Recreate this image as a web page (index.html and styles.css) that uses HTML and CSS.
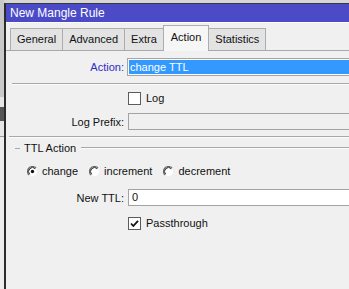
FILE: index.html
```html
<!DOCTYPE html>
<html lang="en">
<head>
  <meta charset="UTF-8" />
  <title>New Mangle Rule</title>
  <link rel="stylesheet" href="styles.css">
</head>
<body>
  <div class="desk">
    <!-- window behind -->
    <div class="behind">
      <div class="behind-top"></div>
      <div class="behind-mark"></div>
      <div class="behind-rest"></div>
    </div>

    <div class="window">
      <div class="titlebar">New Mangle Rule</div>

      <!-- tabs -->
      <div class="tabs">
        <div class="tab">General</div>
        <div class="tab">Advanced</div>
        <div class="tab">Extra</div>
        <div class="tab active">Action</div>
        <div class="tab">Statistics</div>
      </div>

      <div class="panel">
        <div class="row row-action">
          <label class="lbl blue">Action:</label>
          <div class="select"><span class="sel-text">change TTL</span></div>
        </div>

        <div class="sep"></div>

        <div class="row row-log">
          <span></span>
          <div class="check-line">
            <span class="checkbox"></span>
            <span>Log</span>
          </div>
        </div>

        <div class="row row-prefix">
          <label class="lbl">Log Prefix:</label>
          <div class="input"></div>
        </div>

        <div class="sep sep2"></div>

        <!-- TTL Action group -->
        <div class="group-head">
          <span class="dash"></span>
          <span class="group-title">TTL Action</span>
          <span class="line"></span>
        </div>

        <div class="radios">
          <div class="radio-item">
            <svg class="radio" width="11" height="11" viewBox="0 0 11 11">
              <circle cx="5.5" cy="5.5" r="4.5" fill="#fff"/>
              <path d="M9.04 1.96 A5 5 0 0 0 1.96 9.04" fill="none" stroke="#6e6e6e" stroke-width="1.2"/>
              <path d="M8.3 2.7 A3.9 3.9 0 0 0 2.7 8.3" fill="none" stroke="#1e1e1e" stroke-width="1"/>
              <circle cx="5.5" cy="5.5" r="1.7" fill="#111"/>
            </svg>
            <span>change</span>
          </div>
          <div class="radio-item">
            <svg class="radio" width="11" height="11" viewBox="0 0 11 11">
              <circle cx="5.5" cy="5.5" r="4.5" fill="#fff"/>
              <path d="M9.04 1.96 A5 5 0 0 0 1.96 9.04" fill="none" stroke="#6e6e6e" stroke-width="1.2"/>
              <path d="M8.3 2.7 A3.9 3.9 0 0 0 2.7 8.3" fill="none" stroke="#1e1e1e" stroke-width="1"/>
            </svg>
            <span>increment</span>
          </div>
          <div class="radio-item">
            <svg class="radio" width="11" height="11" viewBox="0 0 11 11">
              <circle cx="5.5" cy="5.5" r="4.5" fill="#fff"/>
              <path d="M9.04 1.96 A5 5 0 0 0 1.96 9.04" fill="none" stroke="#6e6e6e" stroke-width="1.2"/>
              <path d="M8.3 2.7 A3.9 3.9 0 0 0 2.7 8.3" fill="none" stroke="#1e1e1e" stroke-width="1"/>
            </svg>
            <span>decrement</span>
          </div>
        </div>

        <div class="row row-ttl">
          <label class="lbl">New TTL:</label>
          <div class="input white">0</div>
        </div>

        <div class="row row-pass">
          <span></span>
          <div class="check-line">
            <span class="checkbox">
              <svg width="11" height="11" viewBox="0 0 11 11">
                <polyline points="2,5.5 4.3,8 9,2.8" fill="none" stroke="#111" stroke-width="1.8"/>
              </svg>
            </span>
            <span>Passthrough</span>
          </div>
        </div>
      </div>
    </div>
  </div>
</body>
</html>
```
FILE: styles.css
```css
html, body {
  margin: 0;
  overflow: hidden;
}

body {
  font-family: "Liberation Sans", Arial, sans-serif;
  font-size: 11px;
  color: #111;
  background-color: #d6d6d6;
  width: 349px;
  height: 289px;
}

.desk {
  display: flex;
  height: 100%;
}

/* window behind, left strip */
.behind {
  width: 4px;
  display: flex;
  flex-direction: column;
  flex-shrink: 0;
}
.behind-top {
  height: 97px;
  background: #c9c9c9;
}
.behind-mark {
  height: 40px;
  background: linear-gradient(#e6e6e6 0 10px, #555 10px 24px, #e6e6e6 24px 39px, #9a9a9a 39px);
}
.behind-rest {
  flex: 1;
  background: #ededed;
}

.window {
  margin-top: 3px;
  flex: 1;
  min-width: 0;
  background: #f0f0f0;
  border-top: 1px solid #3a3a3a;
  border-left: 2px solid #2c2c2c;
}

.titlebar {
  height: 18px;
  line-height: 18px;
  padding-left: 4px;
  background: #4b4bc8;
  color: #fff;
  font-size: 12px;
  border-bottom: 1px solid #fdfdfd;
}

/* tabs */
.tabs {
  display: flex;
  align-items: flex-end;
  height: 27px;
  padding-left: 4px;
  border-bottom: 1px solid #a9a9a9;
}
.tab {
  height: 21px;
  line-height: 21px;
  padding: 0 6px;
  background: #e3e3e3;
  border: 1px solid #adadad;
  border-bottom: none;
  margin-right: -1px;
}
.tab.active {
  position: relative;
  height: 25px;
  line-height: 23px;
  background: #f6f6f6;
  margin-bottom: -1px;
  padding: 0 7px;
  z-index: 1;
}

/* form */
.panel {
  padding-top: 7px;
}

.row {
  display: grid;
  grid-template-columns: 118px 1fr;
  column-gap: 4px;
  align-items: center;
}

.lbl {
  text-align: right;
}
.blue {
  color: #2d2dc8;
}

.row-action {
  height: 18px;
}
.select {
  border: 1px solid #a5a5a5;
  border-right: none;
  background: #fdfdfd;
  padding: 1px 0 1px 1px;
  box-sizing: border-box;
  height: 18px;
  margin-left: -1px;
}
.sel-text {
  display: block;
  height: 14px;
  line-height: 14px;
  background: #3399ff;
  color: #fff;
  padding-left: 1px;
}

.sep {
  margin: 7px 0 0 6px;
  border-top: 1px solid #a8a8a8;
  border-bottom: 1px solid #fcfcfc;
}
.sep2 {
  margin-top: 6px;
  margin-left: 3px;
}

.row-log {
  height: 16px;
  margin-top: 5px;
}

.check-line {
  display: flex;
  align-items: center;
  gap: 5px;
}
.checkbox {
  width: 11px;
  height: 11px;
  border: 1px solid #5c5c5c;
  background: #fff;
  display: flex;
}

.row-prefix {
  height: 17px;
  margin-top: 7px;
}
.input {
  height: 17px;
  box-sizing: border-box;
  border: 1px solid #a3a3a3;
  border-right: none;
  line-height: 15px;
  padding-left: 3px;
}
.input.white {
  background: #fff;
}

/* group */
.group-head {
  display: flex;
  align-items: center;
  height: 14px;
  margin-top: 3px;
  padding-left: 9px;
}
.group-head .dash {
  width: 5px;
  border-top: 1px solid #a8a8a8;
}
.group-title {
  margin: 0 5px 0 4px;
}
.group-head .line {
  flex: 1;
  border-top: 1px solid #a8a8a8;
  border-bottom: 1px solid #fcfcfc;
}

.radios {
  display: flex;
  align-items: center;
  height: 16px;
  margin-top: 8px;
  padding-left: 21px;
  gap: 11px;
}
.radio-item {
  display: flex;
  align-items: center;
  gap: 4px;
}

.row-ttl {
  height: 17px;
  margin-top: 10px;
}

.row-pass {
  height: 16px;
  margin-top: 9px;
}
```
